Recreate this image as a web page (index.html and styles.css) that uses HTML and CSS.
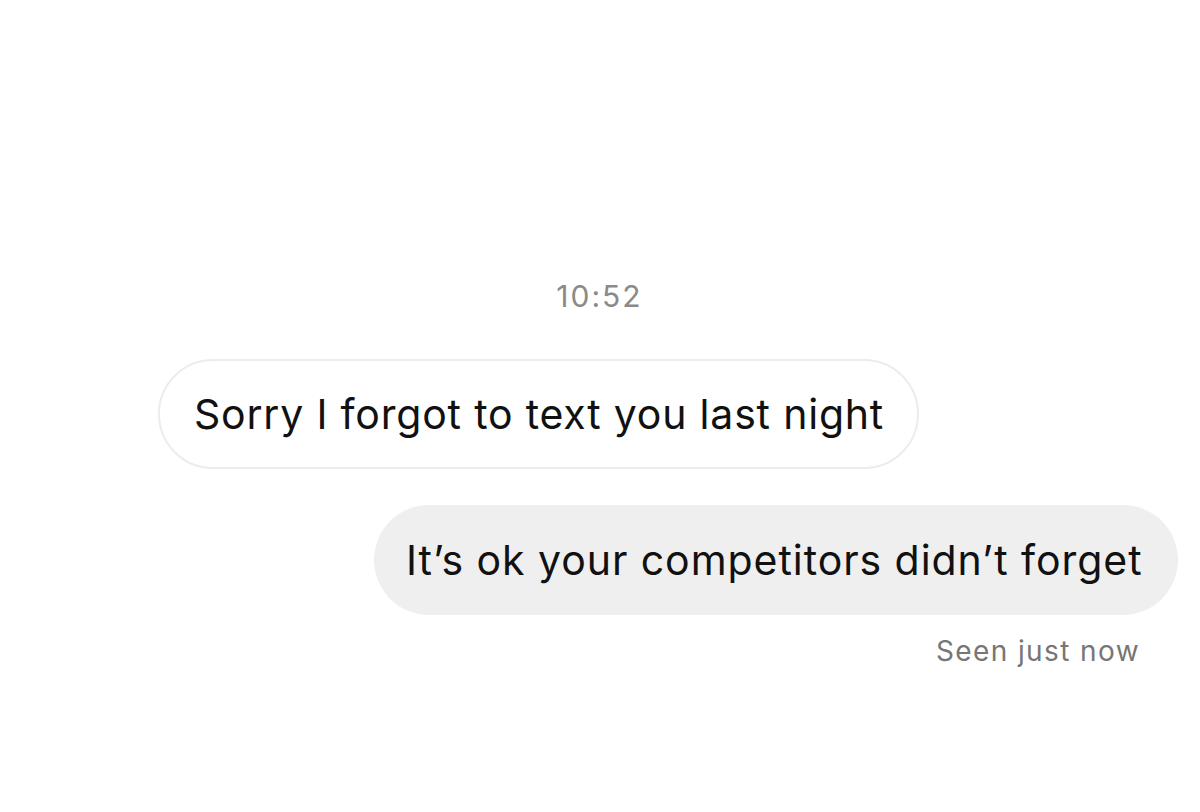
FILE: index.html
```html
<!DOCTYPE html>
<html>
<head>
<meta charset="utf-8">
<link rel="stylesheet" href="styles.css">
</head>
<body>
<div class="thread">
  <div class="time">10:52</div>
  <div class="row row-in">
    <div class="bubble bubble-in">Sorry I forgot to text you last night</div>
  </div>
  <div class="row row-out">
    <div class="bubble bubble-out">It’s ok your competitors didn’t forget</div>
  </div>
  <div class="seen">Seen just now</div>
</div>
</body>
</html>
```
FILE: styles.css
```css
html, body {
  margin: 0;
  padding: 0;
  background: #ffffff;
}
body {
  width: 1200px;
  height: 812px;
  overflow: hidden;
  font-family: Inter, "Liberation Sans", Arial, sans-serif;
  color: #111111;
}
.thread {
  display: flex;
  flex-direction: column;
  padding-top: 278px;
}
.time {
  align-self: center;
  margin-left: -1px;
  font-size: 30px;
  line-height: 36px;
  letter-spacing: 2px;
  color: #8a8a8a;
}
.row {
  display: flex;
}
.row-in {
  justify-content: flex-start;
  padding-left: 158px;
  margin-top: 45px;
}
.row-out {
  justify-content: flex-end;
  padding-right: 22px;
  margin-top: 36px;
}
.bubble {
  box-sizing: border-box;
  height: 110px;
  border-radius: 55px;
  display: flex;
  align-items: center;
  font-size: 41px;
  white-space: nowrap;
}
.bubble-in {
  width: 761px;
  padding-left: 34px;
  letter-spacing: 0.8px;
  background: #ffffff;
  border: 2px solid #ececec;
}
.bubble-out {
  width: 804px;
  padding-left: 32px;
  letter-spacing: 0.95px;
  background: #efefef;
}
.seen {
  align-self: flex-end;
  margin-right: 60px;
  margin-top: 20px;
  font-size: 28px;
  line-height: 32px;
  letter-spacing: 1.4px;
  color: #767676;
}
```
